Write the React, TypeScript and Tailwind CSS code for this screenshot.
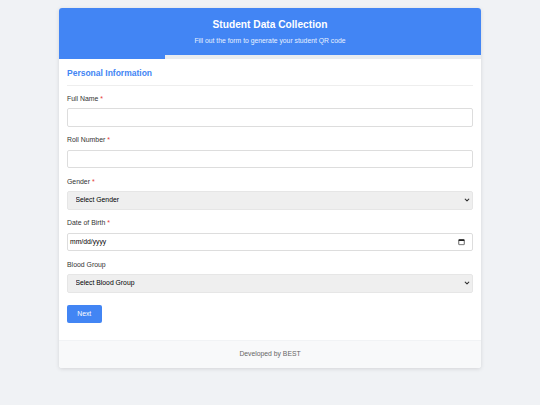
import React from "react";

const Chevron = () => (
  <svg className="pointer-events-none absolute right-[3px] top-1/2 -translate-y-1/2" width="6" height="6" viewBox="0 0 10 10">
    <path d="M2 3.5 L5 6.5 L8 3.5" fill="none" stroke="#333" strokeWidth="1.8" strokeLinecap="round" strokeLinejoin="round" />
  </svg>
);

const Label = ({ text, required }: { text: string; required?: boolean }) => (
  <div className="mb-[5.5px] text-[6.9px] leading-[8px] text-[#333]">
    {text}
    {required && <span className="text-[#e53935]"> *</span>}
  </div>
);

export default function App() {
  return (
    <div className="min-h-[405px] bg-[#f0f2f5] pt-[8px] font-['Liberation_Sans',Arial,sans-serif]">
      <div className="mx-auto w-[422px] overflow-hidden rounded-[3px] bg-white shadow-[0_1px_4px_rgba(0,0,0,0.12)]">
        <div className="bg-[#4285f4] pt-[10.5px] pb-[9.5px] text-center text-white">
          <div className="text-[10.2px] font-bold leading-[12px]">Student Data Collection</div>
          <div className="mt-[6.5px] text-[6.8px] leading-[8px] text-[#e8f0fe]">
            Fill out the form to generate your student QR code
          </div>
        </div>
        <div className="h-[4px] bg-[#e9ecef]">
          <div className="h-full w-1/4 bg-[#4285f4]" />
        </div>
        <div className="px-[8px] pt-[9px] pb-[17px]">
          <div className="border-b border-[#eeeeee] pb-[6.5px] text-[8.5px] font-bold leading-[11px] text-[#4285f4]">
            Personal Information
          </div>
          <div className="mt-[8.5px]">
            <div className="mb-[9.5px]">
              <Label text="Full Name" required />
              <input className="block h-[18.5px] w-full rounded-[2px] border border-[#dddddd] bg-white px-[5px] text-[6.8px] outline-none" />
            </div>
            <div className="mb-[9.5px]">
              <Label text="Roll Number" required />
              <input className="block h-[18.5px] w-full rounded-[2px] border border-[#dddddd] bg-white px-[5px] text-[6.8px] outline-none" />
            </div>
            <div className="mb-[9.5px]">
              <Label text="Gender" required />
              <div className="relative">
                <select className="block h-[18.5px] w-full appearance-none rounded-[2px] border border-[#e6e6e6] bg-[#efefef] pl-[7.5px] text-[6.8px] text-black outline-none">
                  <option>Select Gender</option>
                  <option>Male</option>
                  <option>Female</option>
                  <option>Other</option>
                </select>
                <Chevron />
              </div>
            </div>
            <div className="mb-[9.5px]">
              <Label text="Date of Birth" required />
              <div className="relative flex h-[18.5px] w-full items-center rounded-[2px] border border-[#dddddd] bg-white pl-[2px] text-[6.8px] text-black">
                <span>mm/dd/yyyy</span>
                <svg className="absolute right-[7px] top-1/2 -translate-y-1/2" width="7" height="7" viewBox="0 0 14 14">
                  <rect x="1.5" y="2" width="11" height="10.5" rx="1" fill="none" stroke="#222" strokeWidth="1.4" />
                  <rect x="1.5" y="2" width="11" height="3" fill="#222" />
                </svg>
              </div>
            </div>
            <div className="mb-[9.5px]">
              <Label text="Blood Group" />
              <div className="relative">
                <select className="block h-[18.5px] w-full appearance-none rounded-[2px] border border-[#e6e6e6] bg-[#efefef] pl-[7.5px] text-[6.8px] text-black outline-none">
                  <option>Select Blood Group</option>
                  <option>A+</option>
                  <option>A-</option>
                  <option>B+</option>
                  <option>B-</option>
                  <option>AB+</option>
                  <option>AB-</option>
                  <option>O+</option>
                  <option>O-</option>
                </select>
                <Chevron />
              </div>
            </div>
            <button className="mt-[12.5px] block h-[18px] w-[34.5px] rounded-[2px] bg-[#4285f4] text-[6.8px] leading-[18px] text-white">
              Next
            </button>
          </div>
        </div>
        <div className="flex h-[28px] items-center justify-center border-t border-[#f1f3f5] bg-[#f8f9fa] text-[6.8px] text-[#666]">
          Developed by BEST
        </div>
      </div>
    </div>
  );
}
